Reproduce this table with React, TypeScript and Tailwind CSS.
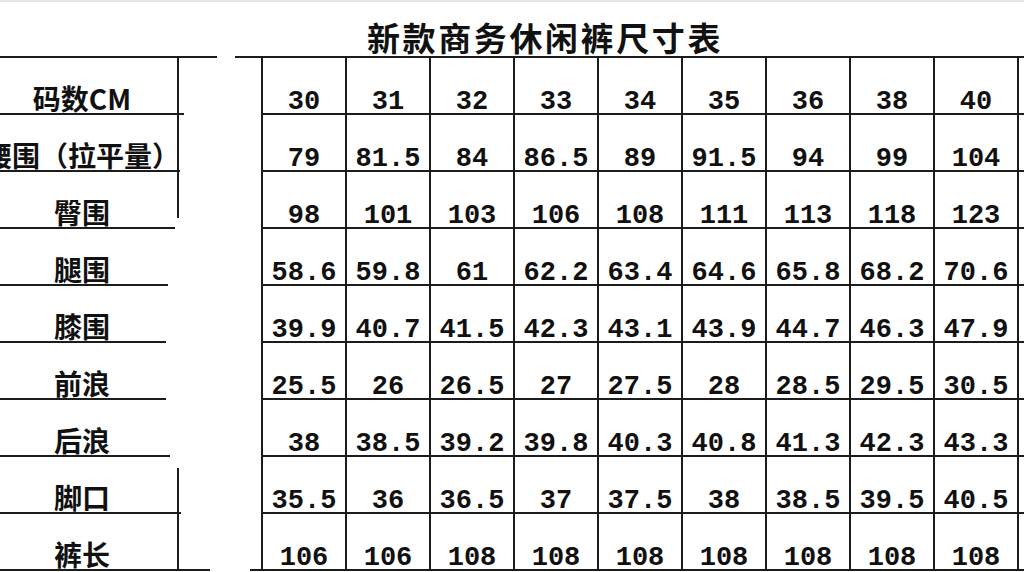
const sizes = [
  { label: "码数CM", values: ["30", "31", "32", "33", "34", "35", "36", "38", "40"], line: "w-[184px]", seg: "full" },
  { label: "腰围（拉平量）", values: ["79", "81.5", "84", "86.5", "89", "91.5", "94", "99", "104"], line: "w-[180px]", seg: "full" },
  { label: "臀围", values: ["98", "101", "103", "106", "108", "111", "113", "118", "123"], line: "w-[175px]", seg: "top" },
  { label: "腿围", values: ["58.6", "59.8", "61", "62.2", "63.4", "64.6", "65.8", "68.2", "70.6"], line: "w-[168px]", seg: "none" },
  { label: "膝围", values: ["39.9", "40.7", "41.5", "42.3", "43.1", "43.9", "44.7", "46.3", "47.9"], line: "w-[166px]", seg: "none" },
  { label: "前浪", values: ["25.5", "26", "26.5", "27", "27.5", "28", "28.5", "29.5", "30.5"], line: "w-[166px]", seg: "none" },
  { label: "后浪", values: ["38", "38.5", "39.2", "39.8", "40.3", "40.8", "41.3", "42.3", "43.3"], line: "w-[170px]", seg: "none" },
  { label: "脚口", values: ["35.5", "36", "36.5", "37", "37.5", "38", "38.5", "39.5", "40.5"], line: "w-[181px]", seg: "bottom" },
  { label: "裤长", values: ["106", "106", "108", "108", "108", "108", "108", "108", "108"], line: "w-[210px]", seg: "full" },
];

function Segment({ kind }: { kind: string }) {
  // кусочки вертикальной линии слева
  return (
    <div className="w-[2px] h-[55px] flex flex-col">
      {kind === "full" && <div className="h-full bg-[#1c1c1c]" />}
      {kind === "top" && <div className="h-[46px] bg-[#1c1c1c]" />}
      {kind === "bottom" && <div className="mt-[11px] flex-1 bg-[#1c1c1c]" />}
    </div>
  );
}

export default function App() {
  return (
    <div className="w-[1024px] h-[572px] overflow-hidden bg-white text-[#111]">
      <div className="h-[2px] bg-[#e6e6e6]" />
      {/* Заголовок */}
      <div className="h-[54px] pt-[19px] pl-[367px]">
        <h1 className="font-['Noto_Sans_CJK_SC',sans-serif] font-bold text-[33px] leading-none tracking-[2.6px] whitespace-nowrap">
          新款商务休闲裤尺寸表
        </h1>
      </div>

      <div className="flex">
        {/* Левая колонка с названиями */}
        <div className="w-[261px] shrink-0 flex flex-col">
          <div className="h-[2px] w-[217px] bg-[#1c1c1c]" />
          {sizes.map((r, idx) => (
            <div key={r.label} className="h-[57px] flex flex-col">
              <div className="h-[55px] flex">
                <div className="w-[164px] flex items-end justify-center pb-[1px]">
                  <span className="font-['Noto_Sans_CJK_SC',sans-serif] font-bold text-[28px] leading-none whitespace-nowrap">
                    {r.label}
                  </span>
                </div>
                <div className="w-[13px]" />
                <Segment kind={r.seg} />
              </div>
              <div className="h-[2px] flex justify-between">
                <div className={`h-[2px] bg-[#1c1c1c] ${r.line}`} />
                {idx === sizes.length - 1 && <div className="h-[2px] w-[11px] bg-[#1c1c1c]" />}
              </div>
            </div>
          ))}
        </div>

        {/* Таблица размеров */}
        <div className="flex flex-col shrink-0">
          <div className="h-[2px] w-[900px] -ml-[26px] bg-[#1c1c1c]" />
          <div className="border-l-2 border-[#1c1c1c] flex flex-col">
            {sizes.map((r) => (
              <div key={r.label} className="flex">
                {r.values.map((v, i) => (
                  <div
                    key={i}
                    className="w-[84px] h-[57px] shrink-0 border-r-2 border-b-2 border-[#1c1c1c] flex items-end justify-center"
                  >
                    <span className="font-['Liberation_Mono',monospace] font-bold text-[27px] leading-[22px] whitespace-nowrap">
                      {v}
                    </span>
                  </div>
                ))}
                <div className="w-[84px] h-[57px] shrink-0 border-r-2 border-b-2 border-[#1c1c1c]" />
              </div>
            ))}
          </div>
        </div>
      </div>
    </div>
  );
}
